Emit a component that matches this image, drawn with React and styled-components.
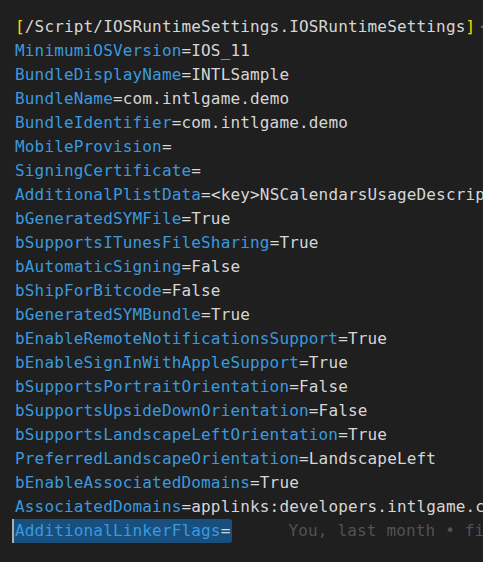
import React from 'react';
import styled, { createGlobalStyle } from 'styled-components';

const GlobalStyle = createGlobalStyle`
  html, body {
    margin: 0;
    padding: 0;
    background: #1f1f1f;
    overflow: hidden;
  }
`;

const Editor = styled.div`
  background: #1f1f1f;
  height: 562px;
  width: 483px;
  overflow: hidden;
  padding: 15px 0 0 14px;
  box-sizing: border-box;
  font-family: 'DejaVu Sans Mono', 'Liberation Mono', monospace;
  font-size: 16px;
  letter-spacing: 0.16px;
`;

const Line = styled.div`
  height: 24px;
  line-height: 24px;
  white-space: pre;
  display: flex;
  align-items: center;
`;

const Text = styled.span`
  display: inline-block;
  height: 24px;
  line-height: 24px;
  padding-left: 1px;
  padding-right: ${({ selected }) => (selected ? '2px' : '0')};
  background: ${({ selected }) => (selected ? '#17507f' : 'transparent')};
  border-left: 2px solid ${({ selected }) => (selected ? '#aeafad' : 'transparent')};
  margin-left: -2px;
  border-radius: ${({ selected }) => (selected ? '0 3px 3px 0' : '0')};
`;

const Key = styled.span`
  color: #3b99de;
`;

const Value = styled.span`
  color: #d6d6d6;
`;

const Bracket = styled.span`
  color: #ffd700;
`;

const Blame = styled.span`
  color: #525252;
  margin-left: 56px;
`;

const Dot = styled.span`
  color: #6a6a6a;
  margin-left: 2px;
`;

const settings = [
  ['MinimumiOSVersion', 'IOS_11'],
  ['BundleDisplayName', 'INTLSample'],
  ['BundleName', 'com.intlgame.demo'],
  ['BundleIdentifier', 'com.intlgame.demo'],
  ['MobileProvision', ''],
  ['SigningCertificate', ''],
  ['AdditionalPlistData', '<key>NSCalendarsUsageDescription</key>'],
  ['bGeneratedSYMFile', 'True'],
  ['bSupportsITunesFileSharing', 'True'],
  ['bAutomaticSigning', 'False'],
  ['bShipForBitcode', 'False'],
  ['bGeneratedSYMBundle', 'True'],
  ['bEnableRemoteNotificationsSupport', 'True'],
  ['bEnableSignInWithAppleSupport', 'True'],
  ['bSupportsPortraitOrientation', 'False'],
  ['bSupportsUpsideDownOrientation', 'False'],
  ['bSupportsLandscapeLeftOrientation', 'True'],
  ['PreferredLandscapeOrientation', 'LandscapeLeft'],
  ['bEnableAssociatedDomains', 'True'],
  ['AssociatedDomains', 'applinks:developers.intlgame.com'],
];

const App = () => (
  <>
    <GlobalStyle />
    <Editor>
      <Line>
        <Text>
          <Bracket>[</Bracket>
          <Value>/Script/IOSRuntimeSettings.IOSRuntimeSettings</Value>
          <Bracket>]</Bracket>
        </Text>
        <Dot>·</Dot>
      </Line>
      {settings.map(([key, value]) => (
        <Line key={key}>
          <Text>
            <Key>{key}</Key>
            <Value>={value}</Value>
          </Text>
        </Line>
      ))}
      <Line>
        <Text selected>
          <Key>AdditionalLinkerFlags</Key>
          <Value>=</Value>
        </Text>
        <Blame>You, last month • first commit</Blame>
      </Line>
    </Editor>
  </>
);

export default App;
